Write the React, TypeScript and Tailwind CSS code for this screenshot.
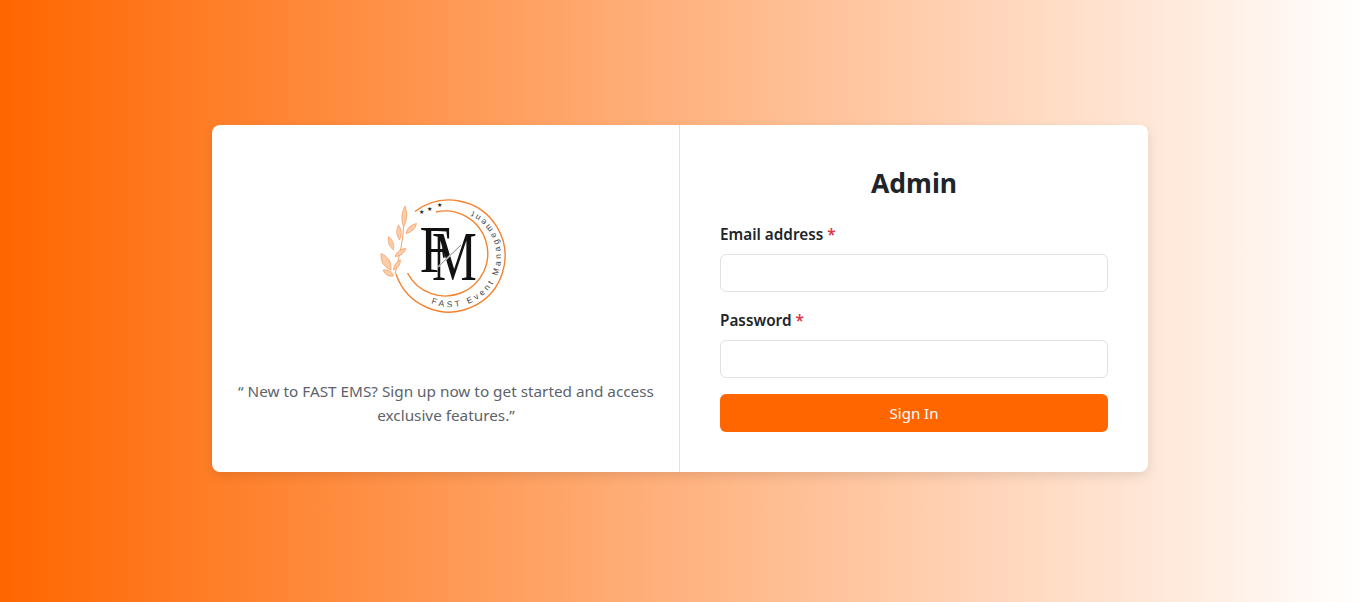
import React from 'react';

// base x, base y, tip x, tip y, half width
const leaves = [
  [33.5, 37, 35, 16, 3],
  [36, 43.5, 46.5, 33.5, 3],
  [29.5, 50, 28.5, 35, 2.8],
  [25, 66.5, 36, 58.5, 2.8],
  [23.5, 60, 18.5, 46.5, 2.8],
  [23.5, 80, 30.5, 70, 2.4],
  [21, 80, 11, 63.5, 4.5],
  [23.5, 86, 13, 80, 3],
];

function leafPath([bx, by, tx, ty, w]: number[]) {
  const mx = (bx + tx) / 2;
  const my = (by + ty) / 2;
  const len = Math.hypot(tx - bx, ty - by);
  const nx = (-(ty - by) / len) * w * 1.6;
  const ny = ((tx - bx) / len) * w * 1.6;
  return `M${bx} ${by} Q${mx + nx} ${my + ny} ${tx} ${ty} Q${mx - nx} ${my - ny} ${bx} ${by}Z`;
}

function Logo() {
  return (
    <svg width="145" height="130" viewBox="4 0 145 130" className="block">
      <path d="M33.5 37 C33 52 28 72 25 84" fill="none" stroke="#f6a266" strokeWidth="1" />
      {leaves.map((leaf, i) => (
        <path key={i} d={leafPath(leaf)} fill="#fbcca8" stroke="#f59a5c" strokeWidth="0.7" />
      ))}
      <path d="M45 21.5 A56 56 0 1 1 26 84" fill="none" stroke="#f5822f" strokeWidth="1.4" />
      <path d="M66 22 A42.5 42.5 0 1 1 37.5 83" fill="none" stroke="#f5822f" strokeWidth="1.4" />
      <g fontSize="6" fill="#222" textAnchor="middle">
        <text x="51" y="23.5">★</text>
        <text x="59.5" y="20.5">★</text>
        <text x="69.5" y="16.5">★</text>
      </g>
      <text transform="translate(49.5 82) scale(0.85 1)" fontFamily="Liberation Serif, serif" fontSize="67" fill="#111">F</text>
      <text transform="translate(62 90) scale(0.72 1)" fontFamily="Liberation Serif, serif" fontSize="70" fill="#111">M</text>
      <path d="M68 77 L91 55" stroke="#fff" strokeWidth="1.6" />
      <path d="M68 77 L91 55" stroke="#555" strokeWidth="0.7" />
      <defs>
        <path id="logo-ring" d="M61 113.2 A50 50 0 0 0 100 20" />
      </defs>
      <text fontFamily="Liberation Sans, sans-serif" fontSize="8.5" letterSpacing="2.9" fill="#444">
        <textPath href="#logo-ring">FAST Event Management</textPath>
      </text>
    </svg>
  );
}

function Field({ label, className }: { label: string; className?: string }) {
  return (
    <div className={className}>
      <label className="block text-[15.3px] leading-6 font-semibold text-[#212529] mb-2">
        {label} <span className="text-[#dc3545]">*</span>
      </label>
      <input className="block w-full h-[38px] rounded-md border border-[#dee2e6] bg-white" />
    </div>
  );
}

export default function App() {
  return (
    <div className="min-h-[602px] bg-[linear-gradient(to_right,#ff6600,#ffffff)] pt-[125px] pr-[3px] font-['Noto_Sans',sans-serif] overflow-hidden">
      <div className="mx-auto flex w-[936px] h-[347px] rounded-lg bg-white shadow-[0_4px_12px_rgba(0,0,0,0.1)]">
        {/* Left panel */}
        <div className="w-[468px] border-r border-[#dee2e6] flex flex-col items-center pl-[25px] pr-6 pt-[65px]">
          <Logo />
          <p className="mt-[59px] text-center text-[15.3px] leading-6 text-[#5c636a]">
            “ New to FAST EMS? Sign up now to get started and access exclusive features.”
          </p>
        </div>

        {/* Right panel */}
        <div className="flex-1 p-10">
          <h1 className="text-center text-[26.5px] leading-9 font-bold text-[#212529] mb-[21px]">Admin</h1>
          <Field label="Email address" className="mb-4" />
          <Field label="Password" className="mb-4" />
          <button className="block w-full h-[38px] rounded-md bg-[#ff6600] text-white text-[15px]">Sign In</button>
        </div>
      </div>
    </div>
  );
}
